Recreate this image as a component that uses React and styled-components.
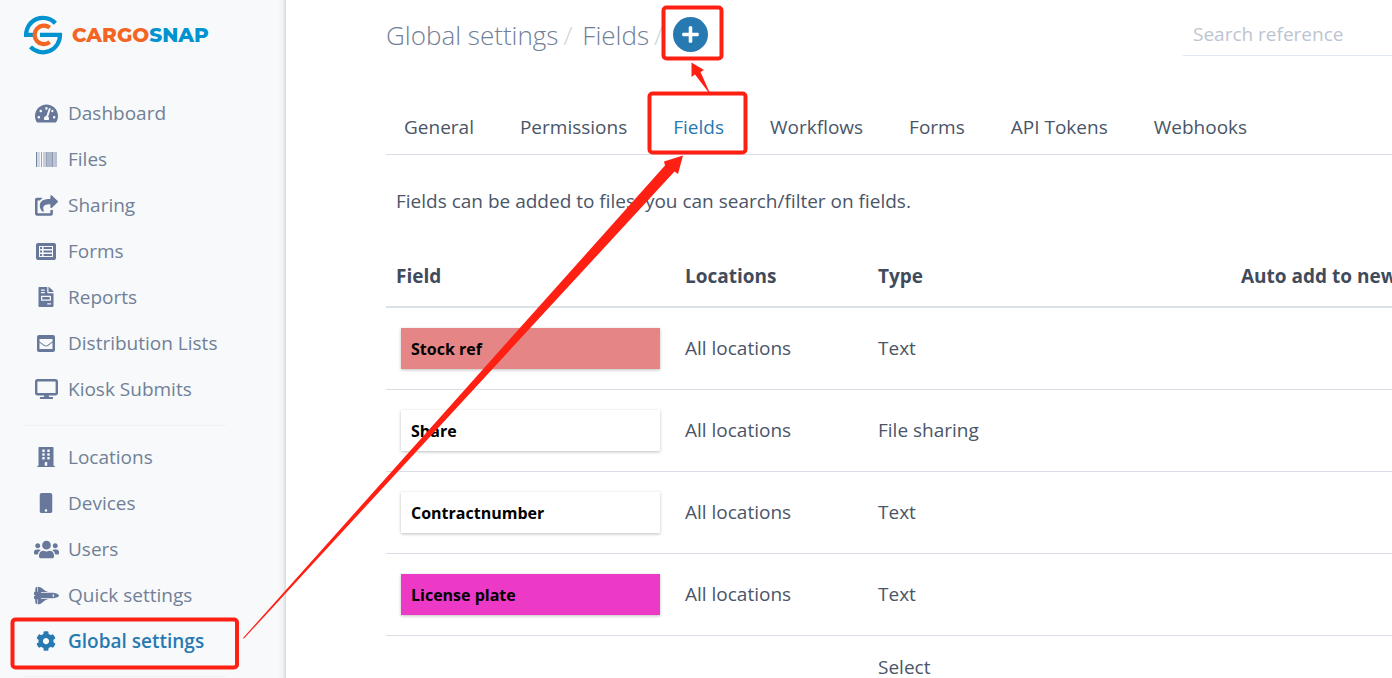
import React from 'react'
import styled, { createGlobalStyle, css } from 'styled-components'
import {
  FaTachometerAlt,
  FaShareSquare,
  FaFileInvoice,
  FaBuilding,
  FaMobile,
  FaUsers,
  FaSpaceShuttle,
  FaCog,
  FaPlus,
} from 'react-icons/fa'

const GlobalStyle = createGlobalStyle`
  * {
    box-sizing: border-box;
  }

  body {
    margin: 0;
    background-color: white;
    color: #4a5568;
    font-family: 'Segoe UI', 'Open Sans', 'Noto Sans', sans-serif;
    font-size: 19px;
    overflow: hidden;
  }
`

const Page = styled.div`
  position: relative;
  display: flex;
  height: 100vh;
  overflow: hidden;
`

const Sidebar = styled.aside`
  flex: none;
  width: 286px;
  padding: 14px 24px 0;
  background-color: #f7f9fb;
  background-image: linear-gradient(to left, #d6d8db, #eff1f3 3px, #f7f9fb 8px);
`

const Brand = styled.a`
  display: block;
  height: 42px;
  margin-bottom: 34px;

  svg {
    display: block;
  }
`

const Menu = styled.ul`
  width: 202px;
  margin: 0;
  padding: 0;
  list-style: none;

  & + & {
    margin-top: 13px;
    padding-top: 8px;
    border-top: 1px solid #edf0f4;
  }

  &:last-child {
    padding-bottom: 12px;
    border-bottom: 1px solid #edf0f4;
  }
`

const MenuLink = styled.a`
  display: flex;
  align-items: center;
  height: 46px;
  padding-left: 8px;
  color: #718096;
  text-decoration: none;
  white-space: nowrap;

  ${({ $active }) => $active && css`
    color: #2779b2;
    font-weight: 600;
  `}
`

const MenuIcon = styled.span`
  display: flex;
  justify-content: center;
  width: 28px;
  margin-right: 8px;
  color: ${({ $active }) => ($active ? '#2779b2' : '#68789a')};
  font-size: 20px;
`

const Content = styled.main`
  flex: 1;
  min-width: 0;
  padding-left: 100px;
`

const TopBar = styled.header`
  display: flex;
  align-items: center;
  justify-content: space-between;
  height: 69px;
`

const Breadcrumb = styled.h1`
  display: flex;
  align-items: center;
  margin: 0;
  color: #718096;
  font-size: 26px;
  font-weight: 300;
  line-height: 34px;
  white-space: nowrap;
`

const Separator = styled.span`
  margin: 0 10px 0 5px;
  color: #cbd5e0;
`

const AddButton = styled.button`
  display: flex;
  align-items: center;
  justify-content: center;
  width: 35px;
  height: 35px;
  padding: 0;
  border: none;
  border-radius: 50%;
  background-color: #2779b2;
  color: white;
  font-size: 19px;
`

const Search = styled.input`
  width: 209px;
  height: 43px;
  padding: 0 10px;
  border: none;
  border-bottom: 1px solid #e2e8f0;
  background: none;
  color: #4a5568;
  font-family: inherit;
  font-size: 19px;

  &::placeholder {
    color: #bcc4d1;
    opacity: 1;
  }
`

const Tabs = styled.nav`
  display: flex;
  gap: 46px;
  height: 86px;
  padding: 31px 18px 0;
  border-bottom: 1px solid #d8dce6;
`

const Tab = styled.a`
  line-height: 54px;
  color: ${({ $active }) => ($active ? '#2779b2' : '#4a5568')};
  text-decoration: none;
  white-space: nowrap;
`

const Intro = styled.p`
  margin: 32px 10px;
  line-height: 28px;
`

const FieldTable = styled.table`
  width: 100%;
  min-width: 1100px;
  border-collapse: collapse;
  table-layout: fixed;

  th {
    height: 60px;
    padding: 0 10px 2px;
    border-bottom: 2px solid #dae1e7;
    color: #414b5c;
    font-weight: 700;
    text-align: left;
    white-space: nowrap;
  }

  td {
    height: 82px;
    padding: 0 10px;
    border-bottom: 1px solid #dadfe7;
  }
`

const Col = styled.col`
  width: ${({ $width }) => $width}px;
`

const FieldRow = styled.tr`
  ${({ $tall }) => $tall && css`
    && td {
      height: 130px;
      padding-top: 18px;
      line-height: 26px;
      vertical-align: top;
    }
  `}
`

const FieldName = styled.div`
  height: 41px;
  margin: 0 5px;
  padding: 0 10px;
  background-color: ${({ $color }) => $color};
  box-shadow: 0 1px 3px rgba(0, 0, 0, 0.26);
  color: black;
  font-size: 16px;
  font-weight: 700;
  line-height: 42px;
`

const Annotations = styled.svg`
  position: absolute;
  top: 0;
  left: 0;
  pointer-events: none;
`

const BarcodeIcon = () => (
  <svg width="21" height="15" viewBox="0 0 21 15" fill="currentColor">
    <path d="M0 0h1v15H0zM19.5 0h1v15h-1z" opacity="0.9" />
    <path d="M1 0h3v15H1z" opacity="0.25" />
    <path d="M5 0h1v15H5zM7.5 0h1v15h-1zM9.5 0h1.5v15H9.5z" opacity="0.65" />
    <path d="M11 0h5v15h-5z" opacity="0.5" />
    <path d="M16 0h1v15h-1zM17.5 0h1v15h-1z" opacity="0.75" />
  </svg>
)

const FormIcon = () => (
  <svg width="20" height="17" viewBox="0 0 20 17">
    <rect width="20" height="17" rx="2" fill="currentColor" />
    <path fill="#f7f9fb" d="M3 3h14v11H3z" />
    <path
      fill="none"
      stroke="currentColor"
      d="M4 5h2M4 8.5h2M4 12h2M7.5 5H16M7.5 8.5H16M7.5 12H16"
      strokeWidth="2"
    />
  </svg>
)

const MailIcon = () => (
  <svg width="18" height="17" viewBox="0 0 18 17">
    <rect width="18" height="17" rx="2" fill="currentColor" />
    <path fill="#f7f9fb" d="M2.5 4h13v2.4L10.6 10q-1.6 1.2-3.2 0L2.5 6.4z" />
    <path fill="#f7f9fb" d="M2.5 7.6l4.3 3.2q2.2 1.5 4.4 0l4.3-3.2v6.4h-13z" />
  </svg>
)

const ScreenIcon = () => (
  <svg width="23" height="20" viewBox="0 0 23 20">
    <rect x="1.2" y="1.2" width="20.6" height="14" rx="1.5" fill="none" stroke="currentColor" strokeWidth="2.4" />
    <path fill="currentColor" d="M9.5 15.5h4l.6 2.5h3.1a1 1 0 010 2H5.8a1 1 0 010-2h3.1z" />
  </svg>
)

const Logo = () => (
  <svg width="190" height="42" viewBox="0 0 190 42" role="img" aria-label="Cargosnap">
    <g fill="none" strokeWidth="4.2">
      <path stroke="#0093d0" d="M2 22.7V21A17 17 0 0 1 31.4 9.2M0 20.9H9" />
      <path stroke="#0093d0" d="M16 20.9H36A17 17 0 0 1 6.5 32.8" />
      <path stroke="#f26522" d="M25.7 13.6A9.3 9.3 0 1 0 25.7 28.2" />
    </g>
    <text x="48" y="28" fontFamily="Montserrat, 'Open Sans', sans-serif" fontSize="20" fontWeight="800" fill="#f26522">
      CARGO<tspan fill="#0093d0">SNAP</tspan>
    </text>
  </svg>
)

const mainMenu = [
  { label: 'Dashboard', icon: <FaTachometerAlt size={23} /> },
  { label: 'Files', icon: <BarcodeIcon /> },
  { label: 'Sharing', icon: <FaShareSquare size={23} /> },
  { label: 'Forms', icon: <FormIcon /> },
  { label: 'Reports', icon: <FaFileInvoice /> },
  { label: 'Distribution Lists', icon: <MailIcon /> },
  { label: 'Kiosk Submits', icon: <ScreenIcon /> },
]

const settingsMenu = [
  { label: 'Locations', icon: <FaBuilding /> },
  { label: 'Devices', icon: <FaMobile /> },
  { label: 'Users', icon: <FaUsers size={25} /> },
  { label: 'Quick settings', icon: <FaSpaceShuttle size={25} /> },
  { label: 'Global settings', icon: <FaCog />, active: true },
]

const tabs = ['General', 'Permissions', 'Fields', 'Workflows', 'Forms', 'API Tokens', 'Webhooks']

const fields = [
  { name: 'Stock ref', color: '#e58585', type: 'Text' },
  { name: 'Share', color: '#ffffff', type: 'File sharing' },
  { name: 'Contractnumber', color: '#ffffff', type: 'Text' },
  { name: 'License plate', color: '#ed3ac6', type: 'Text' },
  { name: '', type: 'Select' },
]

const MenuItems = ({ items }) => (
  <Menu>
    {items.map(({ label, icon, active }) => (
      <li key={label}>
        <MenuLink href="#" $active={active}>
          <MenuIcon $active={active}>{icon}</MenuIcon>
          {label}
        </MenuLink>
      </li>
    ))}
  </Menu>
)

const App = () => {
  return (
    <>
      <GlobalStyle />
      <Page>
        <Sidebar>
          <Brand href="#"><Logo /></Brand>
          <MenuItems items={mainMenu} />
          <MenuItems items={settingsMenu} />
        </Sidebar>
        <Content>
          <TopBar>
            <Breadcrumb>
              Global settings<Separator>/</Separator>
              Fields<Separator>/</Separator>
              <AddButton aria-label="Add field"><FaPlus /></AddButton>
            </Breadcrumb>
            <Search type="text" placeholder="Search reference" aria-label="Search reference" />
          </TopBar>
          <Tabs>
            {tabs.map(tab => (
              <Tab key={tab} href="#" $active={tab === 'Fields'}>{tab}</Tab>
            ))}
          </Tabs>
          <Intro>Fields can be added to files, you can search/filter on fields.</Intro>
          <FieldTable>
            <colgroup>
              <Col $width={289} />
              <Col $width={193} />
              <Col $width={363} />
              <Col $width={255} />
            </colgroup>
            <thead>
              <tr>
                <th>Field</th>
                <th>Locations</th>
                <th>Type</th>
                <th>Auto add to new</th>
              </tr>
            </thead>
            <tbody>
              {fields.map(({ name, color, type }) => (
                <FieldRow key={name} $tall={type === 'Select'}>
                  <td>{name && <FieldName $color={color}>{name}</FieldName>}</td>
                  <td>{name && 'All locations'}</td>
                  <td>{type}</td>
                  <td />
                </FieldRow>
              ))}
            </tbody>
          </FieldTable>
        </Content>
        <Annotations width="1392" height="678" viewBox="0 0 1392 678" aria-hidden="true">
          <g fill="none" stroke="#ff2014" strokeWidth="4">
            <rect x="12.5" y="619.5" width="224.5" height="48" rx="3" />
            <rect x="649.5" y="93.5" width="96" height="59" rx="3" />
            <rect x="663.5" y="7.5" width="58" height="51" rx="3" />
          </g>
          <path fill="#ff2014" d="M243 638L665 165.5L664 161.5L683 155.5L678 174L674.5 171.5L244 638.5Z" />
          <path fill="#ff2014" d="M691.5 62.5L704 70L700.5 72L711 95.5L695 74.5L691.5 77Z" />
        </Annotations>
      </Page>
    </>
  )
}

export default App
